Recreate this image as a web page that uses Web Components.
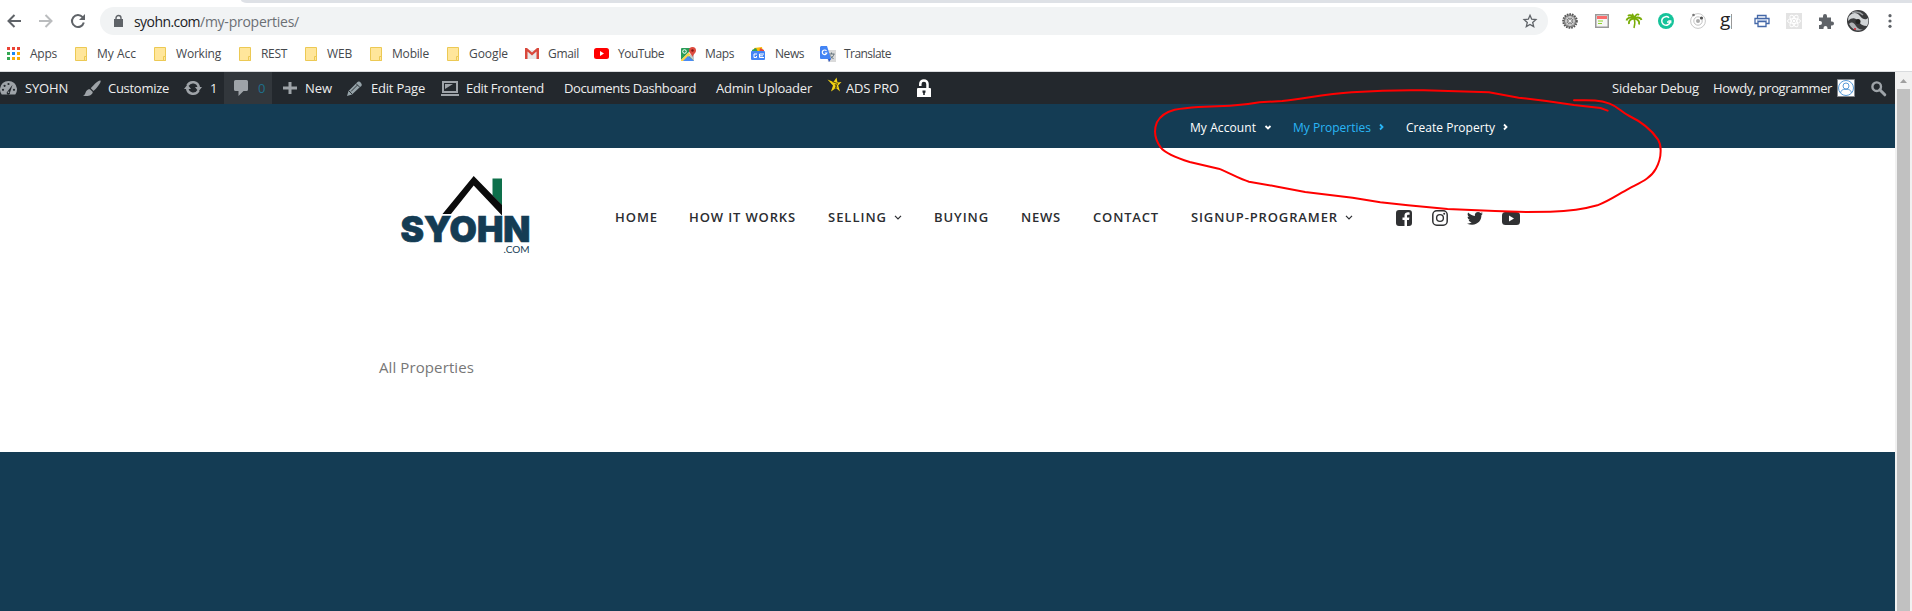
<!DOCTYPE html>
<html lang="en"><head><meta charset="utf-8"><title>My Properties</title>
<style>html,body{margin:0;height:100%;overflow:hidden;background:#fff}body{font-family:"Open Sans","Noto Sans",sans-serif}</style></head>
<body><app-window></app-window>
<script>
const define=(name,html)=>customElements.define(name,class extends HTMLElement{
  constructor(){super();this.attachShadow({mode:'open'}).innerHTML=html}
});
const folder='<path d="M.5.5h11v13H.5z" fill="#ffe69b" stroke="#ecc954"/><path d="M9.5 9.5h2v4h-2z" fill="#ffe69b" stroke="#ecc954"/>';
const ICONS={
 back:[14,14,'<path d="M14 7H1.5M7.5 1L1.5 7l6 6" fill="none" stroke="#5f6368" stroke-width="2"/>'],
 forward:[14,14,'<path d="M0 7h12.500M6.500 1l6 6-6 6" fill="none" stroke="#babcbe" stroke-width="2"/>'],
 reload:[14,14,'<path d="M11.600 3.200A6 6 0 1 0 12.800 8.600" fill="none" stroke="#5f6368" stroke-width="2"/><path d="M14 0v6H8z" fill="#5f6368"/>'],
 lock:[9,12,'<path d="M0 4h9v8H0z" fill="#5f6368"/><path d="M2 5V3a2.500 2.500 0 0 1 5 0v2" fill="none" stroke="#5f6368" stroke-width="1.400"/>'],
 star:[14,14,'<path d="M7 1.300l1.700 3.900 4.200.4-3.200 2.800 1 4.200L7 10.400l-3.700 2.200 1-4.200L1.100 5.600l4.200-.4z" fill="none" stroke="#5f6368" stroke-width="1.300"/>'],
 apps:[13,13,'<path d="M0 0h3v3H0zM5 0h3v3H5zM10 0h3v3h-3z" fill="#ea4335"/><path d="M0 5h3v3H0zM0 10h3v3H0z" fill="#34a853"/><path d="M5 5h3v3H5z" fill="#1a88f5"/><path d="M10 5h3v3h-3zM5 10h3v3H5zM10 10h3v3h-3z" fill="#fbac05"/>'],
 folder:[12,14,folder],
 gmail:[14,11,'<path d="M2 2h10v9H2z" fill="#e8e8e8"/><path d="M0 0h2l5 4.500L12 0h2v11h-2.500V3.600L7 7.500 2.500 3.600V11H0z" fill="#d8483c"/>'],
 youtube:[15,11,'<rect width="15" height="11" rx="2.500" fill="red"/><path d="M6 3l4 2.500L6 8z" fill="#fff"/>'],
 maps:[15,14,'<rect y="1" width="13" height="13" rx="1" fill="#2a9d58"/><path d="M7 8l6-5v11z" fill="#c5c7ca"/><path d="M0 13L12 1l2 2L3 14H1z" fill="#fff"/><path d="M0 13l7.500-7.500 2 2L3 14H0z" fill="#fdd247"/><path d="M2 14l5-5 6 5z" fill="#4a8af4"/><circle cx="3.500" cy="4.500" r="1.800" fill="none" stroke="#fff"/><path d="M8 3.500a3.500 3.500 0 0 1 7 0C15 6 12.500 7 11.500 10 10.500 7 8 6 8 3.500z" fill="#dd4b3e"/><circle cx="11.500" cy="3.500" r="1.200" fill="#811411"/>'],
 news:[14,13,'<path d="M3 1l8-1 1 5H3z" fill="#fbbc04"/><path d="M1 3l4-2 2 4H1z" fill="#2f9e59"/><path d="M9 1l4 2v3H8z" fill="#e2483d"/><rect y="4" width="14" height="9" rx="1" fill="#4385f5"/><path d="M6 7H3v3.500h2.500V9M13 7H8.500v3.500H13M8.500 8.800H12" fill="none" stroke="#fff"/>'],
 translate:[16,16,'<path d="M6 4h10v12H8z" fill="#dadada"/><path d="M8.500 8h6M11.500 6.500V8M14 8c-.5 2.500-2.500 4-4.500 5M9.500 9l4 4" fill="none" stroke="#65747c"/><path d="M1 0h6l4 13H1a1 1 0 0 1-1-1V1z" fill="#4384f4"/><path d="M8 13h3l-2 3z" fill="#2a56c6"/><path d="M6.500 5A2.300 2.300 0 1 0 6.800 7H4.800" fill="none" stroke="#fff" stroke-width="1.200"/>'],
 gear:[16,16,'<circle cx="8" cy="8" r="6.800" fill="#a8a8a8" stroke="#555" stroke-width="2" stroke-dasharray="1.600 1"/><circle cx="8" cy="8" r="5.500" fill="#bbb" stroke="#777"/><circle cx="8" cy="8" r="3" fill="#666"/><path d="M8 3v10M3 8h10M4.500 4.500l7 7M11.500 4.500l-7 7" stroke="#ddd" stroke-width=".8"/><circle cx="8" cy="8" r="1.300" fill="#eee"/>'],
 note:[14,14,'<path d="M.75.75h12.500v12.500H.75z" fill="#f6f6f6" stroke="#999" stroke-width="1.500"/><path d="M2 2h10v3H2z" fill="#fb6c6c"/><path d="M3 7h5M3 9.500h4" stroke="#8dd52b" stroke-width="1.200"/>'],
 palm:[16,16,'<path d="M8 5.500C5 1 3 2 2 3M8 5.500C4 3.500 1 5 .5 7.500M8 5.500C4 6 2.500 8 3 11M8 5.500C10 .5 12 1 13 2M8 5.500c4-2 7-.5 7.500 1.500M8 5.500c4 .5 6 3 5 6M8 5C7 3 7 2 6 1" fill="none" stroke="#79ad08" stroke-width="1.900"/><path d="M8.300 6c1 3 .5 6-.3 9" fill="none" stroke="#79ad08" stroke-width="1.500"/>'],
 grammarly:[16,16,'<circle cx="8" cy="8" r="8" fill="#15c39a"/><path d="M11 4.800A4.300 4.300 0 1 0 12.200 9H9" fill="none" stroke="#fff" stroke-width="1.500"/><path d="M10.300 7.800h2.500v2.500" fill="none" stroke="#fff" stroke-width="1.200"/>'],
 orbit:[16,16,'<circle cx="8" cy="8" r="7.400" fill="none" stroke="#c9c9c9"/><circle cx="8" cy="8" r="4.200" fill="none" stroke="#c2c2c2"/><circle cx="8" cy="8" r="2" fill="#aaa"/><circle cx="11.500" cy="5" r="1.600" fill="#555"/><circle cx="3.500" cy="2" r="1.300" fill="#777"/>'],
 printer:[16,14,'<path d="M3.500 4V1.500h8.500V4M3.500 9.500H1v-5h14v5h-3M4 7.500h8v5H4z" fill="#fff" stroke="#4468a8" stroke-width="1.300"/><path d="M3 6.200h10" stroke="#8da7d5"/>'],
 atom:[16,16,'<path d="M0 0h16v16H0z" fill="#e3e3e3"/><g fill="none" stroke="#fff"><ellipse cx="8" cy="8" rx="6.500" ry="2.500"/><ellipse cx="8" cy="8" rx="6.500" ry="2.500" transform="rotate(60 8 8)"/><ellipse cx="8" cy="8" rx="6.500" ry="2.500" transform="rotate(120 8 8)"/></g><circle cx="8" cy="8" r="1.200" fill="#fff"/>'],
 puzzle:[16,15,'<path d="M1 3.500h4V2a2 2 0 0 1 4 0v1.500h4v4h1a2 2 0 0 1 0 4h-1V15H9.500v-1a2 2 0 0 0-4 0v1H1v-4h1a2 2 0 0 0 0-4H1z" fill="#5f6368"/>'],
 person:[22,22,'<circle cx="11" cy="11" r="11" fill="#3a3b3d"/><path d="M1.500 7C5 2 10 2 13 6s6 4 8 2c1 3 0 6-1 8-4 0-7-2-9-5S5 7 1 11z" fill="#d2d5d7"/><path d="M2 14c3-3 5-1 7 2s5 4 7 3c-4 3-10 2-14-5z" fill="#aeb0b4"/><path d="M5 3c5-2 9 0 11 2" fill="none" stroke="#9a9da0" stroke-width="1.500"/><circle cx="8" cy="19" r="1" fill="#d31e2c"/><circle cx="11" cy="11.500" r="2.500" fill="#222"/>'],
 dots:[4,14,'<circle cx="2" cy="1.700" r="1.600" fill="#5f6368"/><circle cx="2" cy="7" r="1.600" fill="#5f6368"/><circle cx="2" cy="12.300" r="1.600" fill="#5f6368"/>'],
 gauge:[17,14,'<path d="M1.700 13.500A8.500 8.500 0 1 1 15.300 13.500z" fill="#9ea3a8"/><g fill="#23282d"><circle cx="3" cy="8.800" r="1.100"/><circle cx="4.600" cy="4.800" r="1.100"/><circle cx="8.500" cy="3" r="1.100"/><circle cx="14" cy="8.800" r="1.100"/><path d="M12.500 3.800L10 11.500a1.700 1.700 0 1 1-2.500-1z"/></g><circle cx="8.500" cy="11.300" r=".8" fill="#9ea3a8"/>'],
 brush:[18,17,'<path d="M17.500.5C19 2 12 10 10.500 11L7.800 8.300C9 6.500 15.500-.5 17.500.5zM7 9.200l2.800 2.700C9.500 15 5 17 0 15.500c2-.3 2-2 3-4S6 9 7 9.200z" fill="#9ea3a8"/>'],
 refresh:[18,14,'<path d="M3.500 4.500a6 6 0 0 1 11.300 2M14.500 9.500a6 6 0 0 1-11.300-2" fill="none" stroke="#9ea3a8" stroke-width="2.600"/><path d="M11 6h7l-3.500 4.500zM0 8h7L3.500 3.500z" fill="#9ea3a8"/>'],
 comment:[14,16,'<path d="M1.500 0h11A1.500 1.500 0 0 1 14 1.500v8a1.500 1.500 0 0 1-1.500 1.500H9.500L4.500 16v-5h-3A1.500 1.500 0 0 1 0 9.500v-8A1.500 1.500 0 0 1 1.500 0z" fill="#9ea3a8"/>'],
 plus:[14,14,'<path d="M5.500 1h3v4.500H14v3H8.500V13h-3V8.500H0v-3h5.500z" fill="#9ea3a8"/>'],
 pencil:[15,15,'<path d="M10 1.500Q12-.5 14 2t-1 4L5 13.500 0 15l1.500-5z" fill="#96a3a9"/><path d="M4 10.500L10.500 4M9 2.500l3.800 3.800M2 10l3 3" stroke="#23282d" stroke-width=".9"/>'],
 laptop:[18,15,'<path d="M2 1h14v10H2z" fill="none" stroke="#9ea3a8" stroke-width="2"/><path d="M4 3h8L4 8z" fill="#9ea3a8"/><path d="M0 13h18v2H0z" fill="#9ea3a8"/>'],
 gold:[15,22,'<path d="M9.500.5l1 5 4-.5-3.300 3.500 1.800 6-4-3.500L4 14.500l2-6L.5 2.500l6 2.500z" fill="#f3d414"/><path d="M5 4.500l5.500 2-2.500 5M8 7l2 4" fill="none" stroke="#5d500b"/>'],
 unlock:[14,17,'<path d="M3.300 6V4a3.600 3.600 0 0 1 7.200 0v4" fill="none" stroke="#fff" stroke-width="2.500"/><path d="M1 8h12a1 1 0 0 1 1 1v8H0V9a1 1 0 0 1 1-1z" fill="#fff"/><path d="M5.500 10.500h3v2l-.7.5v2H6.200v-2l-.7-.5z" fill="#23282d"/>'],
 avatar:[18,18,'<path d="M.5.5h17v17H.5z" fill="#fff" stroke="#82878c"/><g fill="none" stroke="#589bd8"><circle cx="9" cy="9" r="7.500"/><circle cx="9" cy="7" r="3"/><path d="M3.500 14c1-4 3-3.500 5.500-3.500s4.500-.5 5.500 3.500"/></g>'],
 search:[15,15,'<circle cx="5.700" cy="5.700" r="4.300" fill="none" stroke="#9ea3a8" stroke-width="2.400"/><path d="M8.800 8.800l5 5" stroke="#9ea3a8" stroke-width="3" stroke-linecap="round"/>'],
 down:[8,5,'<path d="M1.500 1L4 3.500 6.500 1" fill="none" stroke="currentColor" stroke-width="1.800"/>'],
 navdown:[8,5,'<path d="M1 .8l3 3 3-3" fill="none" stroke="currentColor" stroke-width="1.200"/>'],
 right:[5,8,'<path d="M1 1.500L3.500 4 1 6.500" fill="none" stroke="currentColor" stroke-width="1.800"/>'],
 facebook:[16,16,'<path d="M3 0h10a3 3 0 0 1 3 3v10a3 3 0 0 1-3 3h-2v-6h2l.4-2.500H11V6c0-.8.400-1.300 1.400-1.300h1.200V2.500C11 2 8.500 2.500 8.500 5.500v2h-2V10h2v6H3a3 3 0 0 1-3-3V3a3 3 0 0 1 3-3z" fill="#303133"/>'],
 instagram:[16,16,'<rect x=".8" y=".8" width="14.400" height="14.400" rx="4" fill="none" stroke="#303133" stroke-width="1.500"/><circle cx="8" cy="8" r="3.400" fill="none" stroke="#303133" stroke-width="1.400"/><circle cx="12.200" cy="3.800" r="1" fill="#303133"/>'],
 twitter:[16,13,'<path d="M16 1.500l-1.600 1.800C14.600 9 9.500 15 0 11.700c2 0 3.500-.5 4.700-1.400-1.500-.1-2.600-1-3-2.300h1.400C1.500 7.500.5 6.200.6 4.700l1.400.4C.5 4 .2 2 1.100.6 3 2.600 5 3.700 7.900 3.900 7.200.2 11.400-1.100 13.600 1L15.600.3l-1.300 1.700z" fill="#303133"/>'],
 tube:[18,13,'<rect width="18" height="13" rx="3.500" fill="#303133"/><path d="M7 3.500l5 3-5 3z" fill="#fff"/>'],
 up:[7,4,'<path d="M0 4l3.500-4L7 4z" fill="#a0a0a0"/>']
};
/* <ui-icon name="..."> draws one glyph of the set at its own size. */
customElements.define('ui-icon',class extends HTMLElement{
  connectedCallback(){const [w,h,b]=ICONS[this.getAttribute('name')];
   this.attachShadow({mode:'open'}).innerHTML=`<style>:host{display:block;flex:none;width:${w}px;height:${h}px}svg{display:block;overflow:visible}</style><svg width="${w}" height="${h}" viewBox="0 0 ${w} ${h}">${b}</svg>`}
});
/* <fit-text w="60"> tracks its text so that it fills a given width. */
customElements.define('fit-text',class extends HTMLElement{
  connectedCallback(){
   const w=+this.getAttribute('w'),r=this.attachShadow({mode:'open'});
   r.innerHTML=`<style>:host{display:block;flex:none;width:${w}px;white-space:nowrap}span{display:inline-block}</style><span><slot></slot></span>`;
   const s=r.querySelector('span'),n=this.textContent.length;
   s.style.letterSpacing=((w-s.getBoundingClientRect().width)/n)+'px';
  }
});
/* <ui-item g="left gap" p="icon gap"> is one entry of a bar. */
customElements.define('ui-item',class extends HTMLElement{
  connectedCallback(){this.attachShadow({mode:'open'}).innerHTML=`<style>:host{display:flex;align-items:center;flex:none;height:100%;margin-left:${this.getAttribute('g')||0}px;gap:${this.getAttribute('p')||0}px}</style><slot></slot>`}
});
const item=(g,icon,p,text,w)=>`<ui-item g="${g}" p="${p}">${icon?`<ui-icon name="${icon}"></ui-icon>`:''}${text?`<fit-text w="${w}">${text}</fit-text>`:''}</ui-item>`;

define('tab-strip',`<style>:host{display:block;height:3px;background:#fff}div{margin-left:241px;height:3px;background:#dee1e6;border-bottom-left-radius:6px 3px}</style><div></div>`);
define('browser-toolbar',`<style>:host{display:flex;align-items:center;height:36px;box-sizing:border-box;font-size:14px;color:#202124}
.omni{display:flex;align-items:center;width:1448px;height:28px;margin-left:15px;border-radius:14px;background:#f1f3f4}.path{color:#6b6f74}
.g{font-size:19px;line-height:10px;width:12px;height:15px;margin-left:14px;border-right:1px solid #999;box-sizing:border-box;color:#222}</style>
${item(7,'back',0)}${item(18,'forward',0)}${item(18,'reload',0)}
<div class="omni">${item(14,'lock',11,'syohn.com',66)}<fit-text class="path" w="99">/my-properties/</fit-text>${item(1224,'star',0)}</div>
${item(14,'gear',0)}${item(17,'note',0)}${item(17,'palm',0)}${item(16,'grammarly',0)}${item(16,'orbit',0)}<div class="g">g</div>${item(22,'printer',0)}${item(16,'atom',0)}${item(16,'puzzle',0)}${item(13,'person',0)}${item(19,'dots',0)}`);
define('bookmarks-bar',`<style>:host{display:flex;align-items:center;height:33px;padding-bottom:3px;border-bottom:1px solid #d9dbde;font-size:12px;color:#45484c;box-sizing:border-box}</style>
${item(7,'apps',10,'Apps',27)}${item(18,'folder',10,'My Acc',39)}${item(18,'folder',10,'Working',45)}${item(18,'folder',10,'REST',26)}${item(18,'folder',10,'WEB',25)}${item(18,'folder',10,'Mobile',37)}${item(18,'folder',10,'Google',39)}${item(17,'gmail',9,'Gmail',31)}${item(15,'youtube',9,'YouTube',46)}${item(17,'maps',9,'Maps',29)}${item(17,'news',10,'News',29)}${item(16,'translate',8,'Translate',47)}`);
define('admin-bar',`<style>:host{display:flex;align-items:center;height:32px;background:#23282d;color:#eee;font-size:13px}.c{width:38px;height:32px;padding-left:10px;margin-left:8px;background:#32373c;color:#1f6f8b}</style>
${item(0,'gauge',8,'SYOHN',43)}${item(15,'brush',7,'Customize',61)}${item(15,'refresh',8,'1',6)}
<div class="c">${item(0,'comment',10,'0',7)}</div>
${item(11,'plus',8,'New',27)}${item(15,'pencil',9,'Edit Page',54)}${item(16,'laptop',7,'Edit Frontend',78)}${item(20,'',0,'Documents Dashboard',132)}${item(20,'',0,'Admin Uploader',96)}${item(15,'gold',4,'ADS PRO',53)}${item(18,'unlock',0)}
${item(681,'',0,'Sidebar Debug',87)}${item(14,'',0,'Howdy, programmer',119)}${item(5,'avatar',0)}${item(16,'search',0)}`);
define('top-menu',`<style>:host{display:flex;align-items:center;height:44px;padding:2px 0 0 1190px;background:#143c54;color:#fff;font-size:12px;box-sizing:border-box}</style>
<ui-item p="8"><fit-text w="66">My Account</fit-text><ui-icon name="down"></ui-icon></ui-item>
<ui-item g="21" p="8" style="color:#29b6f6"><fit-text w="78">My Properties</fit-text><ui-icon name="right"></ui-icon></ui-item>
<ui-item g="22" p="8"><fit-text w="89">Create Property</fit-text><ui-icon name="right"></ui-icon></ui-item>`);
define('site-logo',`<style>:host{display:block;width:136px;height:86px}svg{display:block}</style><svg width="136" height="86" viewBox="398 172 136 86">
<path d="M492.500 178.500h9.500v27l-9.500-10z" fill="#0e704b"/><path d="M473.700 176L502 205v10.500L473.700 185.500 451 214h-8.500z" fill="#0b0b0b"/>
<text x="400.500" y="242" textLength="130" lengthAdjust="spacingAndGlyphs" font-family="Inter" font-weight="900" font-size="35" fill="#143c54" stroke="#143c54" stroke-width=".7">SYOHN</text>
<text x="503.500" y="252.500" textLength="26" lengthAdjust="spacingAndGlyphs" font-family="Lato" font-size="10" fill="#143c54">.COM</text></svg>`);
define('main-nav',`<style>:host{display:flex;align-items:center;height:30px;color:#2b2d31;font-size:13px;font-weight:600}.social{display:flex;align-items:center;height:30px;padding-top:2px}</style>
${item(0,'',0,'HOME',43)}${item(31,'',0,'HOW IT WORKS',107)}${item(32,'',0,'SELLING',59)}${item(7,'navdown',0)}${item(32,'',0,'BUYING',55)}${item(32,'',0,'NEWS',40)}${item(32,'',0,'CONTACT',66)}${item(32,'',0,'SIGNUP-PROGRAMER',147)}${item(7,'navdown',0)}
<div class="social">${item(43,'facebook',0)}${item(20,'instagram',0)}${item(19,'twitter',0)}${item(19,'tube',0)}</div>`);
define('site-header',`<style>:host{display:flex;align-items:flex-start;height:138px;padding:24px 0 0 398px;box-sizing:border-box}main-nav{margin:30px 0 0 81px}</style><site-logo></site-logo><main-nav></main-nav>`);
define('page-content',`<style>:host{display:block;height:166px;padding:70px 0 0 379px;box-sizing:border-box;color:#777;font-size:15px;line-height:22px}</style><fit-text w="95">All Properties</fit-text>`);
define('page-scrollbar',`<style>:host{display:flex;flex-direction:column;align-items:center;width:17px;background:#f1f1f1;padding-top:7px;box-sizing:border-box}i{width:13px;flex:1;background:#c1c1c1;margin-top:6px}</style><ui-icon name="up"></ui-icon><i></i>`);
define('red-markup',`<style>:host{position:absolute;inset:0;pointer-events:none}svg{display:block}</style><svg width="1912" height="611"><path transform="translate(1060 80) scale(.3954 .33333)" vector-effect="non-scaling-stroke" stroke="#f00" stroke-width="2" stroke-linecap="round" fill="none" d="M1300 61C1335 61 1358 58 1390 71C1414 82 1418 95 1440 108C1475 128 1496 150 1512 178Q1520 193 1519 215Q1519 240 1507 266C1493 297 1465 309 1440 325C1410 344 1390 362 1359 376Q1310 393 1240 395L1180 396L1100 393L980 387L880 376L810 367L740 353L620 336L550 320L478 305C455 298 430 279 401 266L328 246Q270 225 255 203Q232 165 245 127Q257 99 290 89Q315 84 350 81L430 77Q470 75 505 67L562 63C610 58 670 42 738 37Q840 29 920 31L1085 37L1160 53L1230 63L1300 75L1367 84L1385 92"/></svg>`);
define('app-window',`<style>:host{display:block;position:relative;width:1912px;height:611px;overflow:hidden}.view{display:flex;height:539px}main{width:1895px}footer{height:159px;background:#143c54}</style>
<tab-strip></tab-strip><browser-toolbar></browser-toolbar><bookmarks-bar></bookmarks-bar>
<div class="view"><main><admin-bar></admin-bar><top-menu></top-menu><site-header></site-header><page-content></page-content><footer></footer></main><page-scrollbar></page-scrollbar></div><red-markup></red-markup>`);
</script></body></html>
